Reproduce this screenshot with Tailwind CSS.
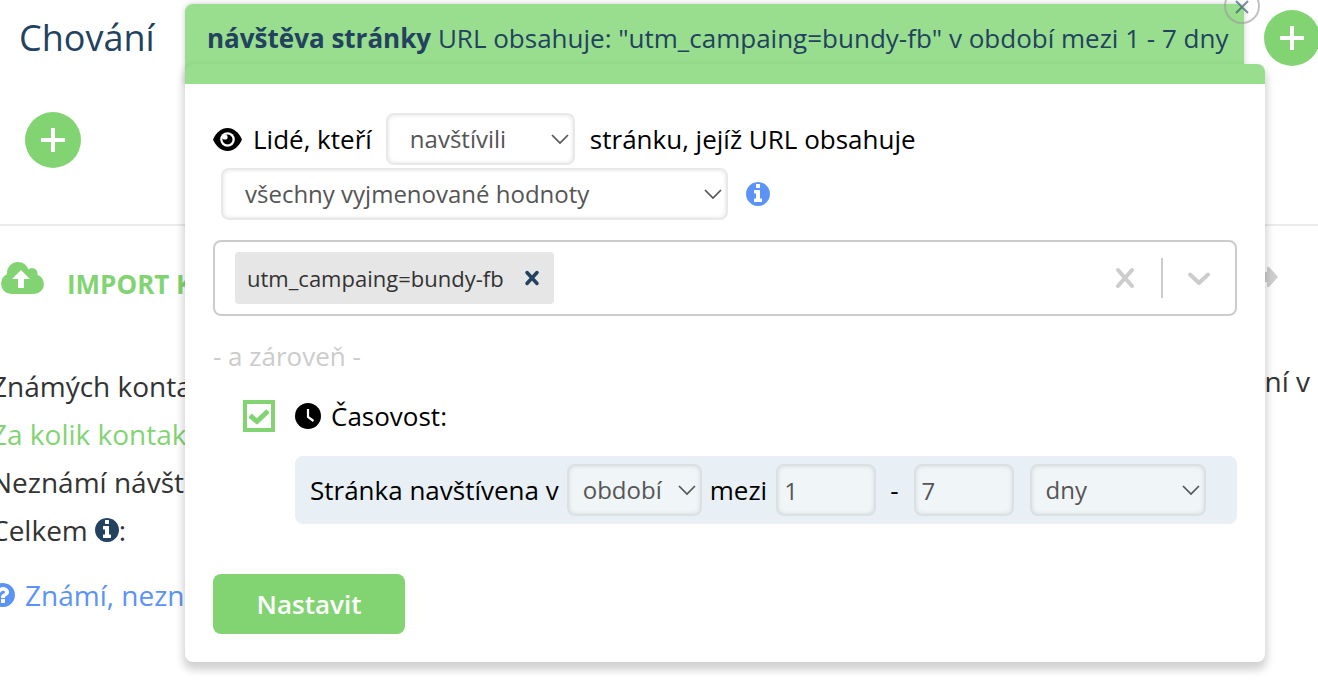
<!DOCTYPE html>
<html lang="cs">
<head>
  <meta charset="UTF-8" />
  <meta name="viewport" content="width=device-width, initial-scale=1.0" />
  <title>Chování</title>
  <script src="https://cdn.jsdelivr.net/npm/@tailwindcss/browser@4"></script>
</head>
<body class="relative min-h-screen overflow-hidden bg-white font-['Open_Sans',sans-serif] text-[26px] leading-9 text-black">

  <!-- HEADER ROW -->
  <header class="flex items-start pt-1">
    <h1 class="w-[185px] shrink-0 pt-2 pl-[19px] text-4xl leading-[52px] text-[#22425f]">Chování</h1>
    <div class="relative mr-5 h-20 grow rounded-t-lg bg-[#98de8e] pt-4 pr-4 pl-[22px] whitespace-nowrap text-[#22425f] shadow-[0_0_6px_rgba(0,0,0,0.2)]">
      <strong class="font-bold">návštěva stránky</strong> URL obsahuje: "utm_campaing=bundy-fb" v období mezi 1 - 7 dny
      <button type="button" aria-label="Zavřít" class="absolute -top-4 -right-4 flex size-9 items-center justify-center rounded-full border-2 border-[#999]/60 text-[#22425f]/60">
        <svg class="size-4" viewBox="0 0 16 16" fill="none" stroke="currentColor" stroke-width="2"><path d="M2 3l12 12M14 3L2 15" /></svg>
      </button>
    </div>
    <button type="button" aria-label="Přidat podmínku" class="-mr-0.5 mt-1.5 flex size-14 shrink-0 items-center justify-center rounded-full bg-[#82d473] text-white">
      <svg class="size-6" viewBox="0 0 24 24" fill="none" stroke="currentColor" stroke-width="4"><path d="M12 0v24M0 12h24" /></svg>
    </button>
  </header>

  <div class="flex h-[142px] border-b-2 border-[#ececec] pt-7 pl-[25px]">
    <button type="button" aria-label="Přidat skupinu" class="flex size-14 items-center justify-center rounded-full bg-[#82d473] text-white">
      <svg class="size-6" viewBox="0 0 24 24" fill="none" stroke="currentColor" stroke-width="4"><path d="M12 0v24M0 12h24" /></svg>
    </button>
  </div>

  <!-- IMPORT + STATS -->
  <main class="flex justify-between pt-[34px] text-[28px] leading-[48px] text-[#333]">
    <section>
      <h2 class="flex items-start gap-[23px] pb-[54px] text-[26px] font-bold text-[#82d473]">
        <svg class="mt-0.5 ml-px h-8 w-[43px]" viewBox="0 0 43 32" fill="currentColor">
          <circle cx="10.5" cy="21.500" r="10.500" />
          <circle cx="17" cy="11" r="11" />
          <circle cx="31" cy="11.500" r="5.500" />
          <circle cx="33" cy="22" r="10" />
          <path d="M10 12h22v20H10z" />
          <path d="M20 8l9 9h-6v9h-6v-9h-6z" fill="#fff" />
        </svg>
        IMPORT K
      </h2>
      <div class="-ml-[9px]">
        <p>Známých konta</p>
        <p class="text-[#82d473]">Za kolik kontak</p>
        <p>Neznámí návšt</p>
        <p class="flex items-center">Celkem
          <svg class="ml-[7px] size-6 text-[#22425f]" viewBox="128 128 1536 1536" fill="currentColor"><path d="M1152 1376v-160q0-14-9-23t-23-9h-96v-512q0-14-9-23t-23-9h-320q-14 0-23 9t-9 23v160q0 14 9 23t23 9h96v320h-96q-14 0-23 9t-9 23v160q0 14 9 23t23 9h448q14 0 23-9t9-23zm-128-896v-192q0-14-9-23t-23-9h-192q-14 0-23 9t-9 23v192q0 14 9 23t23 9h192q14 0 23-9t9-23zm640 416q0 209-103 385.5t-279.5 279.5-385.5 103-385.5-103-279.5-279.5-103-385.5 103-385.5 279.5-279.5 385.5-103 385.5 103 279.5 279.5 103 385.5z" /></svg>:
        </p>
        <a href="#" class="mt-[17px] flex items-center gap-2.5 text-[#5b93f7]">
          <svg class="size-6" viewBox="128 128 1536 1536" fill="currentColor"><path d="M1024 1376v-192q0-14-9-23t-23-9h-192q-14 0-23 9t-9 23v192q0 14 9 23t23 9h192q14 0 23-9t9-23zm256-672q0-88-55.5-163t-138.5-116-170-41q-243 0-371 213-15 24 8 42l132 100q7 6 19 6 16 0 25-12 53-68 86-92 34-24 86-24 48 0 85.5 26t37.5 59q0 38-20 61t-68 45q-63 28-115.5 86.5t-52.5 125.5v36q0 14 9 23t23 9h192q14 0 23-9t9-23q0-19 21.5-49.5t54.5-49.5q32-18 49-28.5t46-35 44.5-48 28-60.5 12.5-81zm384 192q0 209-103 385.5t-279.5 279.5-385.5 103-385.5-103-279.5-279.5-103-385.5 103-385.5 279.5-279.5 385.5-103 385.5 103 279.5 279.5 103 385.5z" /></svg>
          Známí, nezn
        </a>
      </div>
    </section>
    <section class="pr-2">
      <svg class="mt-[7px] mb-[70px] -ml-0.5 h-5 w-4" viewBox="0 0 16 20" fill="#cfcfcf"><path d="M0 5h4V0h2l9 10-9 10H4v-5H0z" /></svg>
      <p>ní v</p>
    </section>
  </main>

  <!-- CONDITION POPUP -->
  <form class="absolute top-16 right-[53px] left-[185px] rounded-lg border-t-20 border-[#98de8e] bg-white px-7 pt-[29px] pb-7 shadow-[0_6px_8px_2px_rgba(0,0,0,0.18)]">
    <div class="flex items-center whitespace-nowrap">
      <svg class="mr-[11px] h-[23px] w-[29px]" viewBox="0 0 29 23">
        <path d="M0 11.500C3 4.500 8.500 0 14.500 0s11.500 4.500 14.500 11.500C26 18.500 20.500 23 14.500 23S3 18.500 0 11.500z" />
        <circle cx="14.500" cy="11.500" r="7.300" fill="#fff" />
        <circle cx="14.500" cy="11.500" r="5" />
        <circle cx="12" cy="9" r="2.600" fill="#fff" />
      </svg>
      <label for="visited">Lidé, kteří</label>
      <div class="relative mr-[15px] ml-3.5 w-[189px]">
        <select id="visited" class="h-[52px] w-full appearance-none rounded-lg border-2 border-[#e8e8e8] bg-white pl-[22px] text-2xl text-[#555] shadow-[inset_0_0_4px_rgba(0,0,0,0.12)]">
          <option>navštívili</option>
        </select>
        <svg class="pointer-events-none absolute top-5 right-1.5 h-3 w-[18px]" viewBox="0 0 18 12" fill="none" stroke="#555" stroke-width="1.700"><path d="M1 2l8 8 8-8" /></svg>
      </div>
      <span>stránku, jejíž URL obsahuje</span>
    </div>
    <div class="mt-[3px] flex items-center pl-2">
      <div class="relative w-[507px]">
        <select aria-label="Způsob porovnání" class="h-[52px] w-full appearance-none rounded-lg border-2 border-[#e8e8e8] bg-white pl-[22px] text-2xl text-[#555] shadow-[inset_0_0_4px_rgba(0,0,0,0.12)]">
          <option>všechny vyjmenované hodnoty</option>
        </select>
        <svg class="pointer-events-none absolute top-5 right-1.5 h-3 w-[18px]" viewBox="0 0 18 12" fill="none" stroke="#555" stroke-width="1.700"><path d="M1 2l8 8 8-8" /></svg>
      </div>
      <svg class="ml-[18px] size-6 text-[#5b93f7]" viewBox="128 128 1536 1536" fill="currentColor"><path d="M1152 1376v-160q0-14-9-23t-23-9h-96v-512q0-14-9-23t-23-9h-320q-14 0-23 9t-9 23v160q0 14 9 23t23 9h96v320h-96q-14 0-23 9t-9 23v160q0 14 9 23t23 9h448q14 0 23-9t9-23zm-128-896v-192q0-14-9-23t-23-9h-192q-14 0-23 9t-9 23v192q0 14 9 23t23 9h192q14 0 23-9t9-23zm640 416q0 209-103 385.5t-279.5 279.5-385.5 103-385.5-103-279.5-279.5-103-385.5 103-385.5 279.5-279.5 385.5-103 385.5 103 279.5 279.5 103 385.5z" /></svg>
    </div>

    <!-- VALUES -->
    <div class="mt-5 flex h-[76px] items-center rounded-lg border-2 border-[#ccc] pl-5">
      <div class="flex h-[52px] items-center gap-5 rounded-sm bg-[#e6e6e6] pr-3.5 pl-3 text-[22px] text-[#333]">
        utm_campaing=bundy-fb
        <button type="button" aria-label="Odebrat hodnotu" class="text-[#22425f]">
          <svg class="size-4" viewBox="0 0 16 16" fill="none" stroke="currentColor" stroke-width="3.500" stroke-linecap="round"><path d="M3 2.500l10 11M13 2.500l-10 11" /></svg>
        </button>
      </div>
      <input type="text" aria-label="Přidat hodnotu" class="min-w-0 grow outline-none" />
      <button type="button" aria-label="Vymazat vše" class="mr-6 text-[#ccc]">
        <svg class="size-6" viewBox="0 0 24 24" fill="none" stroke="currentColor" stroke-width="4" stroke-linecap="round"><path d="M5 4l14 16M19 4L5 20" /></svg>
      </button>
      <span class="h-10 w-0.5 bg-[#ccc]"></span>
      <button type="button" aria-label="Rozbalit" class="mr-6 ml-6 text-[#ccc]">
        <svg class="h-4 w-6" viewBox="0 0 24 16" fill="none" stroke="currentColor" stroke-width="4" stroke-linecap="round" stroke-linejoin="round"><path d="M3 4.500l9 8.500 9-8.500" /></svg>
      </button>
    </div>

    <p class="mt-[22px] text-[#ccc]">- a zároveň -</p>

    <!-- TIMING -->
    <div class="mt-6 flex items-center pl-[30px]">
      <span class="relative mr-5 size-8">
        <input type="checkbox" id="timing" checked class="block size-8 appearance-none border-4 border-[#82d473]" />
        <svg class="pointer-events-none absolute inset-1.5 size-5" viewBox="0 0 20 20" fill="none" stroke="#82d473" stroke-width="5"><path d="M1 9.500l7 6L19 5" /></svg>
      </span>
      <svg class="mr-2.5 size-[26px]" viewBox="0 0 26 26">
        <circle cx="13" cy="13" r="13" />
        <path d="M13 6v8l5.500 4" fill="none" stroke="#fff" stroke-width="2.200" />
      </svg>
      <label for="timing">Časovost:</label>
    </div>
    <div class="mt-[22px] ml-[82px] flex h-[68px] items-center rounded-lg bg-[#e8eff5] pl-[15px] whitespace-nowrap">
      <label for="period">Stránka navštívena v</label>
      <div class="relative mx-2 w-[135px]">
        <select id="period" class="h-[52px] w-full appearance-none rounded-lg border-2 border-[#dce0e3] bg-[#f0f5f8] pl-3.5 text-2xl text-[#555] shadow-[inset_0_0_4px_rgba(0,0,0,0.12)]">
          <option>období</option>
        </select>
        <svg class="pointer-events-none absolute top-5 right-1.5 h-3 w-[18px]" viewBox="0 0 18 12" fill="none" stroke="#555" stroke-width="1.700"><path d="M1 2l8 8 8-8" /></svg>
      </div>
      <label for="from">mezi</label>
      <input type="text" id="from" value="1" class="mr-[14px] ml-[9px] h-[52px] w-[100px] rounded-lg border-2 border-[#dce0e3] bg-[#f0f5f8] pl-1.5 text-2xl text-[#555] shadow-[inset_0_0_4px_rgba(0,0,0,0.12)]" />
      <label for="to">-</label>
      <input type="text" id="to" value="7" class="mr-4 ml-[15px] h-[52px] w-[100px] rounded-lg border-2 border-[#dce0e3] bg-[#f0f5f8] pl-1.5 text-2xl text-[#555] shadow-[inset_0_0_4px_rgba(0,0,0,0.12)]" />
      <div class="relative w-[176px]">
        <select aria-label="Jednotka" class="h-[52px] w-full appearance-none rounded-lg border-2 border-[#dce0e3] bg-[#f0f5f8] pl-3.5 text-2xl text-[#555] shadow-[inset_0_0_4px_rgba(0,0,0,0.12)]">
          <option>dny</option>
        </select>
        <svg class="pointer-events-none absolute top-5 right-1.5 h-3 w-[18px]" viewBox="0 0 18 12" fill="none" stroke="#555" stroke-width="1.700"><path d="M1 2l8 8 8-8" /></svg>
      </div>
    </div>

    <button type="submit" class="mt-[50px] block h-[60px] w-48 rounded-lg bg-[#82d473] font-semibold text-white">Nastavit</button>
  </form>
</body>
</html>
